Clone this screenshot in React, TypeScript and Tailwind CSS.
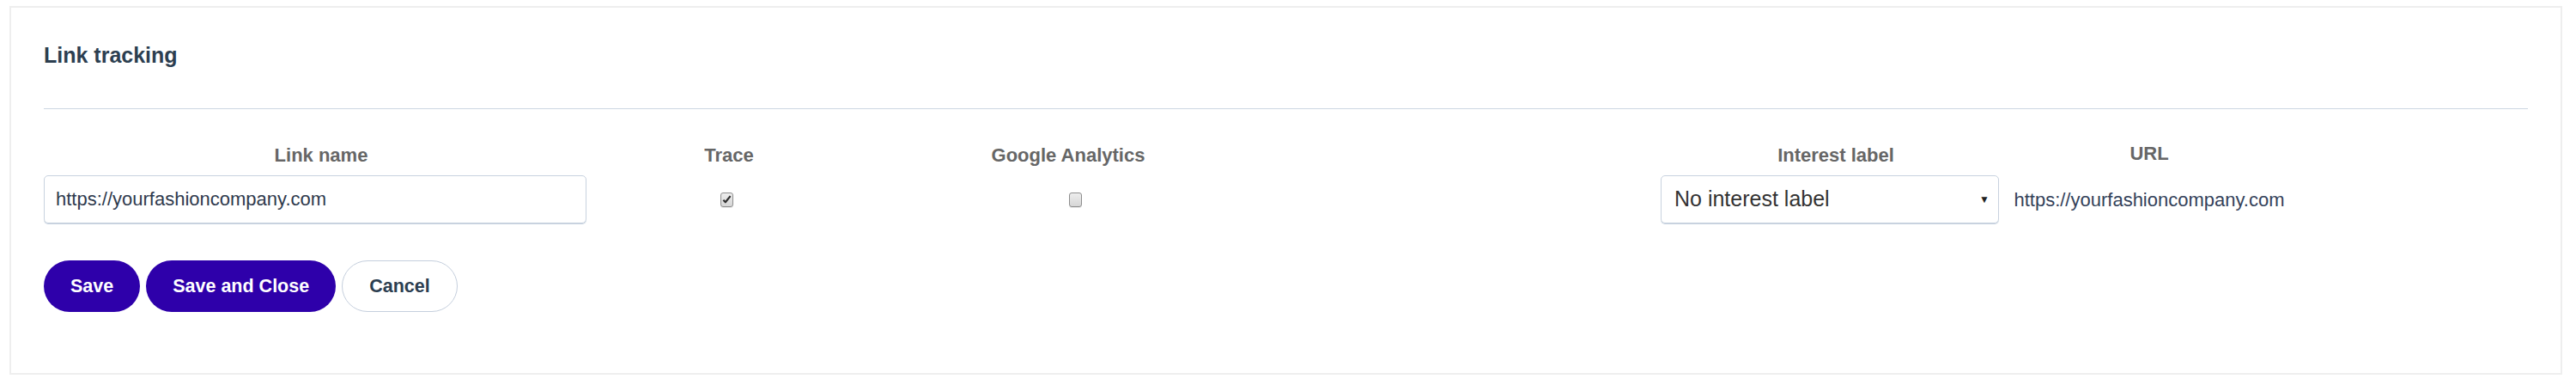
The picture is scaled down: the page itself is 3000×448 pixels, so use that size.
import { useState } from 'react';

function Box({ checked }: { checked?: boolean }) {
  return (
    <span className="flex h-[17px] w-[15px] items-center justify-center rounded-[3px] border border-[#8e8e8e] bg-gradient-to-b from-[#ededed] to-[#d6d6d6] shadow-[0_1px_0_#e6e6e6]">
      {checked && (
        <svg viewBox="0 0 12 12" className="h-[12px] w-[11px]">
          <path d="M1.5 6.8 L4.2 9.6 L10.5 1.8" fill="none" stroke="#2f2f2f" strokeWidth="2.4" strokeLinejoin="round" />
        </svg>
      )}
    </span>
  );
}

export default function App() {
  const [url, setUrl] = useState('https://yourfashioncompany.com');
  const label = 'text-center text-[22px] font-bold leading-[25px] text-[#666666]';
  const btn = 'h-[60px] rounded-full px-[31px] text-[21.5px] font-bold';

  return (
    <div className="h-[448px] w-[3000px] bg-white pl-[11px] pr-[16px] pt-[7px] font-['Liberation_Sans',Arial,sans-serif]">
      <div className="h-[429px] border-2 border-[#eeeeee] px-[38px] pt-[41px]">
        <h3 className="text-[25px] font-bold leading-[29px] text-[#2c3e50]">Link tracking</h3>
        <div className="mt-[47px] h-px bg-[#cdd6e2]" />

        <div className="mt-[41px] grid grid-cols-[646px_304px_486px_433px_422px_322px] gap-y-[11px]">
          <div className={label}>Link name</div>
          <div className={label}>Trace</div>
          <div className={label}>Google Analytics</div>
          <div />
          <div className={`${label} pl-[14px]`}>Interest label</div>
          <div className={`${label} -mt-[2px]`}>URL</div>

          <div className="flex items-center">
            <input
              value={url}
              onChange={(e) => setUrl(e.target.value)}
              className="h-[56px] w-[632px] rounded-[5px] border border-[#c8d2df] px-[13px] text-[22px] text-[#2f3a4d] shadow-[0_1px_0_#c8d2df] outline-none"
            />
          </div>
          <div className="flex items-center justify-center pr-[6px]">
            <Box checked />
          </div>
          <div className="flex items-center justify-center pl-[16px]">
            <Box />
          </div>
          <div />
          <div className="flex items-center pl-[14px]">
            <div className="flex h-[56px] w-[394px] items-center justify-between rounded-[5px] border border-[#c8d2df] pl-[15px] pr-[10px] shadow-[0_1px_0_#c8d2df]">
              <span className="text-[25px] text-[#333333]">No interest label</span>
              <span className="text-[12px] text-[#222222]">▼</span>
            </div>
          </div>
          <div className="flex items-center justify-center text-[22px] text-[#34425a]">
            https://yourfashioncompany.com
          </div>
        </div>

        <div className="mt-[43px] flex gap-[7px]">
          <button className={`${btn} bg-[#2e00aa] text-white`}>Save</button>
          <button className={`${btn} bg-[#2e00aa] text-white`}>Save and Close</button>
          <button className={`${btn} border border-[#c5cfdd] bg-white text-[#2c3e50]`}>Cancel</button>
        </div>
      </div>
    </div>
  );
}
